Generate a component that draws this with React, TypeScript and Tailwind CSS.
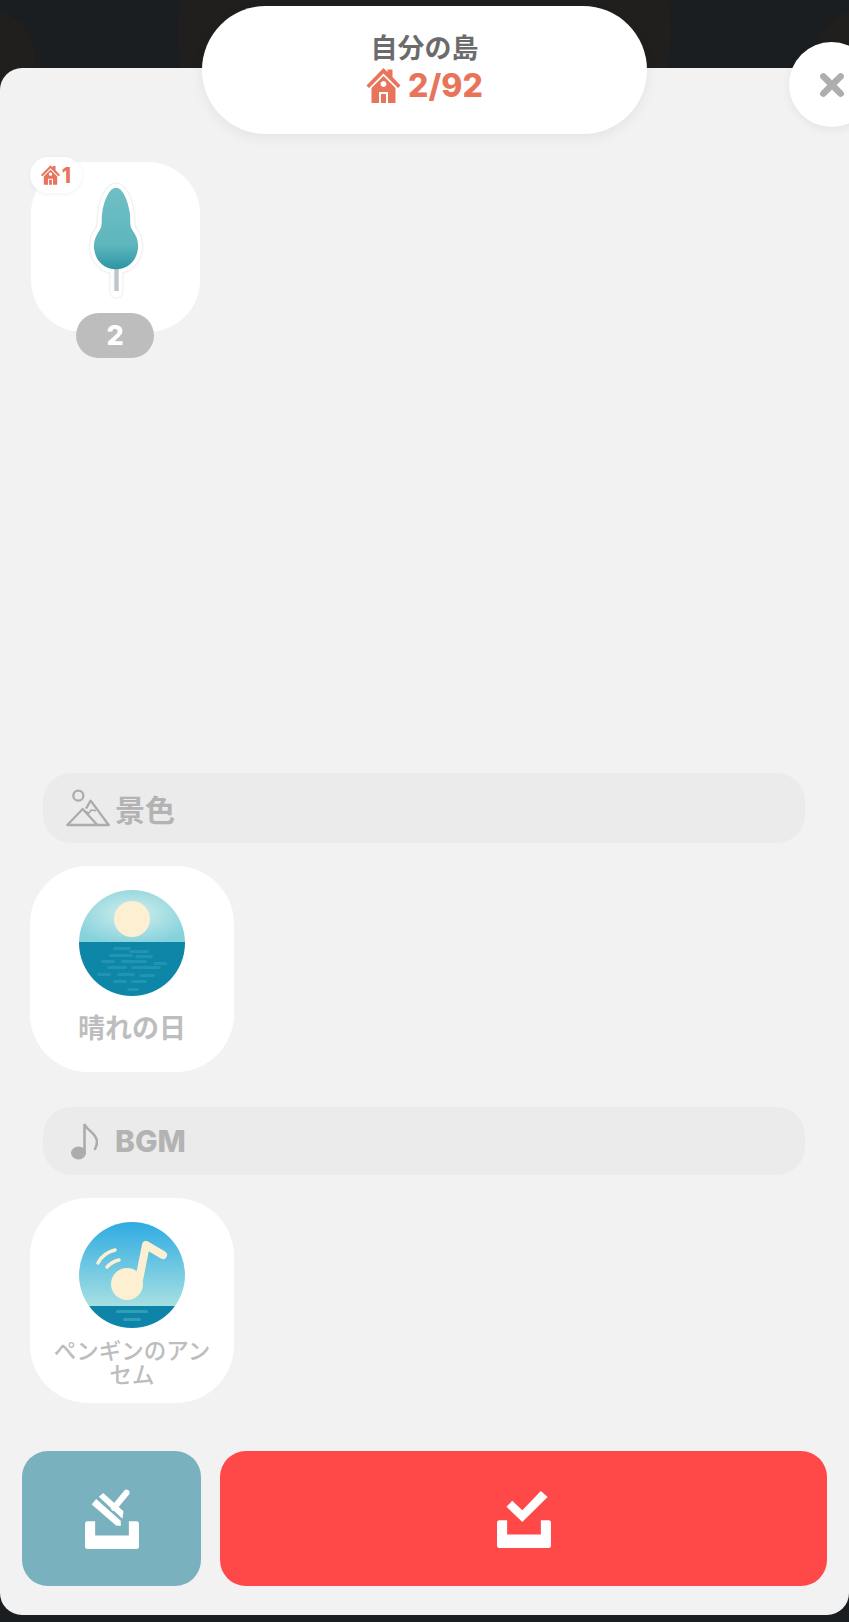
const jp = "font-['Noto_Sans_CJK_JP','Noto_Sans',sans-serif]";

const treeBody =
  "M285 113 C305 113 320 150 326 185 C330 210 324 225 334 240 C347 258 353 275 351 295 C347 335 318 358 285 358 C252 358 223 335 219 295 C217 275 224 258 236 240 C246 225 240 210 244 185 C250 150 265 113 285 113 Z";

function House({ className }: { className: string }) {
  return (
    <svg viewBox="0 0 34 35" className={className} fill="currentColor">
      <path d="M17 0 L21 4 L21 1.5 L26 1.5 L26 9 L34 17.5 L31.5 20 L17 5.5 L2.5 20 L0 17.5 Z" />
      <path
        fillRule="evenodd"
        d="M17 8 L29 20 L29 35 L21.5 35 L21.5 24 L12.5 24 L12.5 35 L5 35 L5 20 Z M17 13 a3 3 0 1 0 0.01 0 Z"
      />
      <rect x="14.5" y="26" width="5" height="9" />
    </svg>
  );
}

function Tree() {
  return (
    <svg viewBox="195 90 180 360" className="w-[60px] h-[120px] drop-shadow-[0_0_1px_rgba(120,120,120,0.3)]">
      <defs>
        <linearGradient id="treeFill" x1="0" y1="0" x2="0" y2="1">
          <stop offset="0" stopColor="#6fbfc5" />
          <stop offset="0.7" stopColor="#5fb6bd" />
          <stop offset="1" stopColor="#2c95a5" />
        </linearGradient>
      </defs>
      <path d={treeBody} fill="#fff" stroke="#fff" strokeWidth="24" strokeLinejoin="round" />
      <path d="M286 350 V425" stroke="#fff" strokeWidth="36" strokeLinecap="round" />
      <rect x="280" y="355" width="13" height="68" fill="#bcc6cb" />
      <path d={treeBody} fill="url(#treeFill)" />
    </svg>
  );
}

function SeaBadge() {
  const ripples = [
    [34, 57, 18], [50, 60, 20], [30, 64, 24], [56, 65, 18], [22, 70, 14], [42, 70, 26], [74, 72, 14],
    [28, 76, 20], [52, 76, 30], [18, 83, 14], [38, 83, 18], [60, 84, 16], [34, 90, 14], [52, 90, 16], [48, 98, 12],
  ];
  return (
    <svg viewBox="0 0 106 106" className="w-[106px] h-[106px]">
      <defs>
        <radialGradient id="sky" cx="0.5" cy="0.45" r="0.6">
          <stop offset="0" stopColor="#d2eeec" />
          <stop offset="1" stopColor="#86d2dc" />
        </radialGradient>
        <clipPath id="seaClip">
          <circle cx="53" cy="53" r="53" />
        </clipPath>
      </defs>
      <g clipPath="url(#seaClip)">
        <rect width="106" height="52" fill="url(#sky)" />
        <circle cx="53" cy="29" r="18" fill="#fdf0d2" />
        <rect y="52" width="106" height="54" fill="#0e86a8" />
        {ripples.map(([x, y, w], i) => (
          <rect key={i} x={x} y={y} width={w} height="3" rx="1.5" fill="#2293b0" />
        ))}
      </g>
    </svg>
  );
}

function MusicBadge() {
  return (
    <svg viewBox="0 0 106 106" className="w-[106px] h-[106px]">
      <defs>
        <linearGradient id="musicSky" x1="0" y1="0" x2="0" y2="1">
          <stop offset="0" stopColor="#2fabe2" />
          <stop offset="1" stopColor="#a6e0e2" />
        </linearGradient>
        <clipPath id="musicClip">
          <circle cx="53" cy="53" r="53" />
        </clipPath>
      </defs>
      <g clipPath="url(#musicClip)">
        <rect width="106" height="84" fill="url(#musicSky)" />
        <rect y="84" width="106" height="22" fill="#0e85a8" />
        <rect x="37" y="88" width="32" height="3" rx="1.5" fill="#2f9fb8" />
        <rect x="44" y="96" width="18" height="3" rx="1.5" fill="#2f9fb8" />
        <circle cx="48" cy="62" r="16" fill="#fdf0d2" />
        <path d="M60 58 L67 23 L84 33" fill="none" stroke="#fdf0d2" strokeWidth="8" strokeLinecap="round" strokeLinejoin="round" />
        <path d="M19 41 C22 35 28 30 36 28" fill="none" stroke="#fdf0d2" strokeWidth="3.5" strokeLinecap="round" />
        <path d="M28 45 C31 42 35 39 40 38" fill="none" stroke="#fdf0d2" strokeWidth="3.5" strokeLinecap="round" />
      </g>
    </svg>
  );
}

function Mountains() {
  return (
    <svg viewBox="18 25 132 114" className="w-[44px] h-[38px]" fill="none" stroke="#acacac" strokeWidth="7" strokeLinejoin="round">
      <circle cx="55" cy="45" r="15" />
      <path d="M22 133 L68 85 L112 133 Z" />
      <path d="M78 84 L92 60 L146 133 L112 133" />
      <path d="M76 92 L86 98 L94 88 L108 90" strokeWidth="5" />
    </svg>
  );
}

function Note() {
  return (
    <svg viewBox="0 0 27 38" className="w-[27px] h-[38px]" fill="none">
      <ellipse cx="7.5" cy="31" rx="7.5" ry="6.5" fill="#acacac" />
      <path d="M13.5 31 V2 C15 8 26 11 26 20 C26 23 25 25 24 27" stroke="#acacac" strokeWidth="2.6" strokeLinecap="round" />
    </svg>
  );
}

const trayPath = "M30 125 Q30 118 37 118 H60 V160 H160 V118 H183 Q190 118 190 125 V193 Q190 200 183 200 H37 Q30 200 30 193 Z";

function CheckTray() {
  return (
    <svg viewBox="30 25 160 172" className="w-[54px] h-[58px]" fill="#fff">
      <path d={trayPath} transform="translate(0 -3)" />
      <path d="M58 75 L75 57 L105 85 L160 28 L180 46 L105 120 Z" />
    </svg>
  );
}

function BroomTray() {
  return (
    <svg viewBox="30 22 160 178" className="w-[54px] h-[60px]" fill="#fff">
      <path d={trayPath} />
      <path d="M50 68 L63 52 L136 116 L136 132 L122 130 Z" />
      <path d="M71 45 L84 34 L144 88 L141 110 Z" />
      <path d="M116 78 L153 33" stroke="#fff" strokeWidth="18" strokeLinecap="round" />
    </svg>
  );
}

function SectionHeader({ className, children }: { className: string; children: React.ReactNode }) {
  return (
    <div className={`ml-[43px] mr-[44px] flex items-center rounded-[28px] bg-[#ebebeb] ${className}`}>{children}</div>
  );
}

export default function App() {
  return (
    <div className="relative w-[849px] h-[1622px] overflow-hidden bg-[#1a1e20]">
      {/* dimmed map buttons behind the sheet */}
      <div className="absolute left-[178px] top-[-180px] w-[493px] h-[420px] rounded-full bg-[#211f1e]" />
      <div className="absolute left-[-60px] top-[10px] w-[95px] h-[95px] rounded-full bg-[#211f1e]" />
      <div className="absolute left-[815px] top-[10px] w-[95px] h-[95px] rounded-full bg-[#211f1e]" />

      <div className="relative mt-[68px] h-[1547px] rounded-[22px] bg-[#f2f2f2] flex flex-col">
        <div className="h-[705px] pt-[94px] pl-[31px]">
          <div className="relative w-[169px] h-[170px] rounded-[52px] bg-white flex justify-center pt-[18px]">
            <Tree />
            <div className="absolute left-[-1px] top-[-5px] w-[52px] h-[36px] rounded-[18px] bg-white shadow-[0_1px_4px_rgba(0,0,0,0.06)] flex items-center justify-center gap-[2px] text-[#e9745c]">
              <House className="w-[19px] h-[20px]" />
              <span className="font-['Inter',sans-serif] font-extrabold text-[21px] leading-none">1</span>
            </div>
            <div className="absolute left-[45px] top-[151px] w-[78px] h-[45px] rounded-[23px] bg-[#bdbdbd] flex items-center justify-center text-white font-['Inter',sans-serif] font-extrabold text-[27px] leading-none">
              2
            </div>
          </div>
        </div>

        <SectionHeader className="h-[70px] pl-[23px] gap-[5px]">
          <Mountains />
          <span className={`${jp} font-bold text-[30px] leading-none text-[#b3b3b3]`}>景色</span>
        </SectionHeader>

        <div className="ml-[30px] mt-[23px] w-[204px] h-[206px] rounded-[58px] bg-white flex flex-col items-center pt-[24px]">
          <SeaBadge />
          <span className={`${jp} mt-[13px] font-bold text-[27px] leading-[36px] text-[#bdbdbd]`}>晴れの日</span>
        </div>

        <SectionHeader className="h-[68px] mt-[35px] pl-[28px] gap-[17px]">
          <Note />
          <span className="font-['Inter',sans-serif] font-extrabold text-[30px] leading-none text-[#b3b3b3]">BGM</span>
        </SectionHeader>

        <div className="ml-[30px] mt-[23px] w-[204px] h-[205px] rounded-[58px] bg-white flex flex-col items-center pt-[24px]">
          <MusicBadge />
          <span className={`${jp} mt-[9px] font-medium text-[22.5px] leading-[24px] text-center text-[#bdbdbd]`}>
            ペンギンのアン
            <br />
            セム
          </span>
        </div>

        <div className="mt-[48px] px-[22px] flex gap-[19px]">
          <button className="w-[179px] h-[135px] rounded-[26px] bg-[#7ab1bf] flex items-center justify-center">
            <BroomTray />
          </button>
          <button className="flex-1 h-[135px] rounded-[26px] bg-[#ff4848] flex items-center justify-center">
            <CheckTray />
          </button>
        </div>
      </div>

      {/* title pill and close button hang over the sheet edge */}
      <div className="absolute left-[202px] top-[6px] w-[445px] h-[128px] rounded-[64px] bg-white shadow-[0_4px_14px_rgba(0,0,0,0.06)] flex flex-col items-center pt-[23px]">
        <span className={`${jp} font-bold text-[27px] leading-[36px] text-[#6b6b6b]`}>自分の島</span>
        <div className="flex items-center gap-[7px] text-[#e9745c] mt-[3px]">
          <House className="w-[35px] h-[35px]" />
          <span className="font-['Inter',sans-serif] font-extrabold text-[32px] leading-[35px]">2/92</span>
        </div>
      </div>
      <div className="absolute left-[789px] top-[42px] w-[85px] h-[85px] rounded-full bg-white shadow-[0_3px_10px_rgba(0,0,0,0.06)] flex items-center pl-[30px]">
        <svg viewBox="0 0 24 24" className="w-[26px] h-[26px]" stroke="#aeaeae" strokeWidth="6" strokeLinecap="round">
          <path d="M4 4 L20 20 M20 4 L4 20" />
        </svg>
      </div>
    </div>
  );
}
